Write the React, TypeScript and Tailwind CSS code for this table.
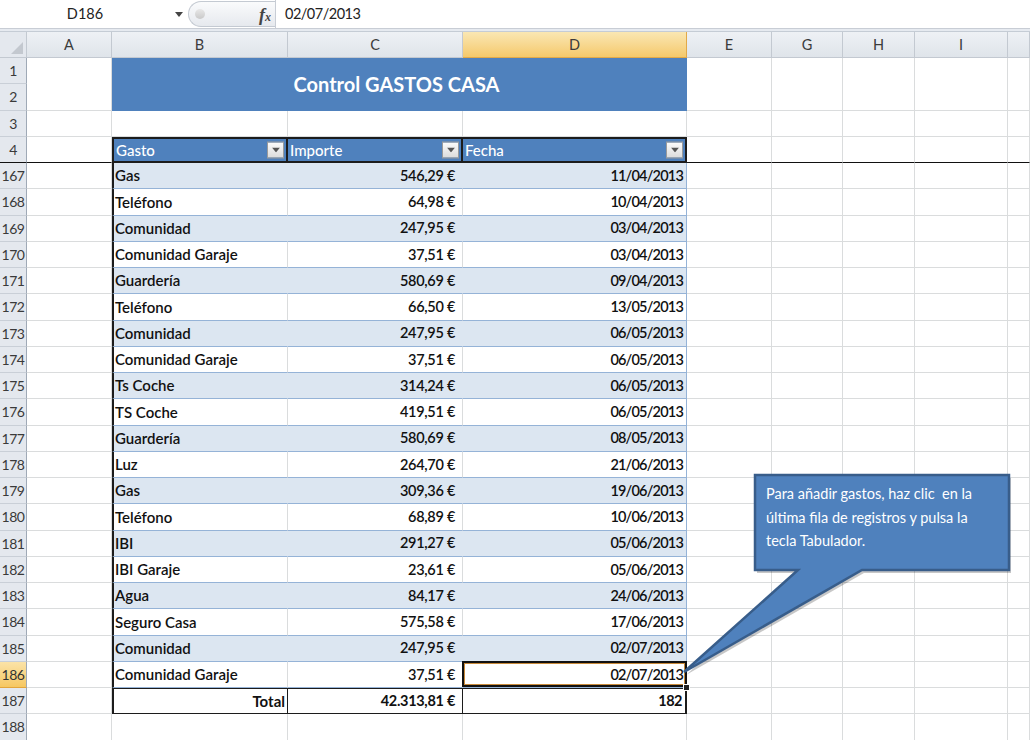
import type {FC, ReactNode} from "react";

type Row = {n: number; gasto: string; importe: string; fecha: string};

const rows: Row[] = [
  {n: 167, gasto: "Gas", importe: "546,29 €", fecha: "11/04/2013"},
  {n: 168, gasto: "Teléfono", importe: "64,98 €", fecha: "10/04/2013"},
  {n: 169, gasto: "Comunidad", importe: "247,95 €", fecha: "03/04/2013"},
  {n: 170, gasto: "Comunidad Garaje", importe: "37,51 €", fecha: "03/04/2013"},
  {n: 171, gasto: "Guardería", importe: "580,69 €", fecha: "09/04/2013"},
  {n: 172, gasto: "Teléfono", importe: "66,50 €", fecha: "13/05/2013"},
  {n: 173, gasto: "Comunidad", importe: "247,95 €", fecha: "06/05/2013"},
  {n: 174, gasto: "Comunidad Garaje", importe: "37,51 €", fecha: "06/05/2013"},
  {n: 175, gasto: "Ts Coche", importe: "314,24 €", fecha: "06/05/2013"},
  {n: 176, gasto: "TS Coche", importe: "419,51 €", fecha: "06/05/2013"},
  {n: 177, gasto: "Guardería", importe: "580,69 €", fecha: "08/05/2013"},
  {n: 178, gasto: "Luz", importe: "264,70 €", fecha: "21/06/2013"},
  {n: 179, gasto: "Gas", importe: "309,36 €", fecha: "19/06/2013"},
  {n: 180, gasto: "Teléfono", importe: "68,89 €", fecha: "10/06/2013"},
  {n: 181, gasto: "IBI", importe: "291,27 €", fecha: "05/06/2013"},
  {n: 182, gasto: "IBI Garaje", importe: "23,61 €", fecha: "05/06/2013"},
  {n: 183, gasto: "Agua", importe: "84,17 €", fecha: "24/06/2013"},
  {n: 184, gasto: "Seguro Casa", importe: "575,58 €", fecha: "17/06/2013"},
  {n: 185, gasto: "Comunidad", importe: "247,95 €", fecha: "02/07/2013"},
  {n: 186, gasto: "Comunidad Garaje", importe: "37,51 €", fecha: "02/07/2013"},
];

const grid = "h-full shrink-0 border-r border-b border-[#dadcdd]";

const RowHeader: FC<{label: ReactNode; active?: boolean; dark?: boolean}> = ({label, active, dark}) => (
  <div
    className={`h-full w-[27px] shrink-0 flex items-center justify-center text-[14px] tracking-[-0.4px] border-r ${
      active
        ? "bg-gradient-to-b from-[#fbe3a7] to-[#f6c760] border-b border-[#e3a53b] text-[#333]"
        : "bg-[#e4e8ee] border-b border-[#c9cfd7] text-[#3a3a3a]"
    } ${dark ? "border-b-[#111]" : ""} border-r-[#9fa9b6]`}
  >
    {label}
  </div>
);

// columns E..J, empty gridline cells
const Tail: FC<{dark?: boolean}> = ({dark}) => {
  const b = dark ? "border-b-[#111]" : "";
  return (
    <>
      <div className={`w-[85px] ${grid} ${b}`} />
      <div className={`w-[71px] ${grid} ${b}`} />
      <div className={`w-[72px] ${grid} ${b}`} />
      <div className={`w-[93px] ${grid} ${b}`} />
      <div className={`flex-1 ${grid} ${b}`} />
    </>
  );
};

const FilterButton: FC = () => (
  <div className="absolute right-[2px] top-1/2 -translate-y-1/2 w-[17px] h-[17px] bg-gradient-to-b from-[#fbfbfb] to-[#dcdcdc] border border-[#9a9a9a] flex items-center justify-center">
    <svg width="8" height="5" viewBox="0 0 8 5">
      <path d="M0 0h8L4 5z" fill="#555" />
    </svg>
  </div>
);

const ColHeader: FC<{w: string; label?: string; active?: boolean}> = ({w, label, active}) => (
  <div
    className={`${w} h-full shrink-0 flex items-center justify-center text-[14.5px] border-r border-b ${
      active
        ? "bg-gradient-to-b from-[#fae7b3] to-[#f5c96a] border-[#e2a948] text-[#3b3b3b]"
        : "bg-gradient-to-b from-[#eef1f5] to-[#dfe4ea] border-[#c3c9d1] text-[#3b3b3b]"
    }`}
  >
    {label}
  </div>
);

export default function App() {
  return (
    <div className="w-[1030px] h-[740px] overflow-hidden bg-white relative font-['Lato',sans-serif] text-[#111]">
      {/* Formula bar */}
      <div className="h-[29px] flex items-center bg-white border-b border-[#c8cdd5]">
        <div className="w-[170px] text-center text-[14.5px] text-[#222]">D186</div>
        <div className="w-[18px] flex items-center justify-center">
          <svg width="8" height="5" viewBox="0 0 8 5">
            <path d="M0 0h8L4 5z" fill="#444" />
          </svg>
        </div>
        <div className="relative h-[26px] w-[87px] rounded-l-full bg-gradient-to-b from-[#fafbfc] to-[#e6e9ee] border-y border-l border-[#c4cad2]">
          <div className="absolute left-[6px] top-[7px] w-[10px] h-[10px] rounded-full bg-gradient-to-b from-[#e8e8e8] to-[#c9c9c9]" />
          <span className="absolute right-[4px] top-0 italic font-['Liberation_Serif',serif] font-bold text-[18px] text-[#444]">
            f<span className="text-[12px]">x</span>
          </span>
        </div>
        <div className="w-px h-[29px] bg-[#c8cdd5]" />
        <div className="pl-[9px] text-[14.5px] tracking-[-0.5px] text-[#222]">02/07/2013</div>
      </div>
      <div className="h-[3px] bg-[#e6eaf0] border-b border-[#c5ccd5]" />

      {/* Column headers */}
      <div className="flex h-[26px]">
        <div className="w-[27px] h-full shrink-0 bg-[#e4e8ee] border-r border-b border-[#c3c9d1] relative">
          <svg className="absolute right-[3px] bottom-[3px]" width="12" height="12" viewBox="0 0 12 12">
            <path d="M12 0v12H0z" fill="#c3c8cf" />
          </svg>
        </div>
        <ColHeader w="w-[85px]" label="A" />
        <ColHeader w="w-[176px]" label="B" />
        <ColHeader w="w-[175px]" label="C" />
        <ColHeader w="w-[224px]" label="D" active />
        <ColHeader w="w-[85px]" label="E" />
        <ColHeader w="w-[71px]" label="G" />
        <ColHeader w="w-[72px]" label="H" />
        <ColHeader w="w-[93px]" label="I" />
        <ColHeader w="flex-1" />
      </div>

      {/* Rows 1-2 with merged title */}
      <div className="flex h-[52.5px]">
        <div className="flex flex-col w-[27px] shrink-0">
          <div className="h-[26.25px]"><RowHeader label="1" /></div>
          <div className="h-[26.25px]"><RowHeader label="2" /></div>
        </div>
        <div className="flex flex-col w-[85px] shrink-0">
          <div className={`h-[26.25px] w-full ${grid}`} />
          <div className={`h-[26.25px] w-full ${grid}`} />
        </div>
        <div className="w-[575px] shrink-0 bg-[#4f81bd] flex items-center justify-center text-white font-bold text-[20px] pr-[6px]">
          Control GASTOS CASA
        </div>
        {[85, 71, 72, 93, 0].map((w) => (
          <div
            key={w}
            className={`flex flex-col shrink-0 ${
              w === 85 ? "w-[85px]" : w === 71 ? "w-[71px]" : w === 72 ? "w-[72px]" : w === 93 ? "w-[93px]" : "flex-1"
            }`}
          >
            <div className={`h-[26.25px] w-full ${grid}`} />
            <div className={`h-[26.25px] w-full ${grid}`} />
          </div>
        ))}
      </div>

      {/* Row 3 */}
      <div className="flex h-[26.25px]">
        <RowHeader label="3" />
        <div className={`w-[85px] ${grid}`} />
        <div className={`w-[176px] ${grid}`} />
        <div className={`w-[175px] ${grid}`} />
        <div className={`w-[224px] ${grid}`} />
        <Tail />
      </div>

      {/* Row 4: table header, frozen pane line below */}
      <div className="flex h-[26.25px]">
        <RowHeader label="4" dark />
        <div className={`w-[85px] ${grid} border-b-[#111]`} />
        <div className="relative w-[176px] h-full shrink-0 bg-[#4f81bd] border-y-2 border-x-2 border-[#1c1c1c] text-white text-[15px] font-medium flex items-center pl-[2px]">
          Gasto
          <FilterButton />
        </div>
        <div className="relative w-[175px] h-full shrink-0 bg-[#4f81bd] border-y-2 border-r-2 border-[#1c1c1c] text-white text-[15px] font-medium flex items-center pl-[2px]">
          Importe
          <FilterButton />
        </div>
        <div className="relative w-[224px] h-full shrink-0 bg-[#4f81bd] border-y-2 border-r-2 border-[#1c1c1c] text-white text-[15px] font-medium flex items-center pl-[2px]">
          Fecha
          <FilterButton />
        </div>
        <Tail dark />
      </div>

      {/* Data rows */}
      {rows.map((r, i) => {
        const band = i % 2 === 0;
        const bg = band ? "bg-[#dce6f1]" : "bg-white";
        const sep = band ? "border-r-[#dce6f1]" : "border-r-[#dadcdd]";
        const active = r.n === 186;
        return (
          <div key={r.n} className="flex h-[26.25px]">
            <RowHeader label={r.n} active={active} />
            <div className={`w-[85px] ${grid}`} />
            <div className={`w-[176px] h-full shrink-0 ${bg} border-l-2 border-l-[#1c1c1c] border-r ${sep} border-b border-b-[#95b3d7] flex items-center pl-[1px] text-[15px] font-semibold`}>
              {r.gasto}
            </div>
            <div className={`w-[175px] h-full shrink-0 ${bg} border-r ${sep} border-b border-b-[#95b3d7] flex items-center justify-end pr-[7px] text-[14.5px] tracking-[-0.3px] font-semibold`}>
              {r.importe}
            </div>
            <div className={`relative w-[224px] h-full shrink-0 ${bg} border-r border-r-[#95b3d7] border-b border-b-[#95b3d7] flex items-center justify-end pr-[3px] text-[14.5px] tracking-[-0.8px] font-semibold`}>
              {r.fecha}
              {active && (
                <>
                  <div className="absolute -left-px -top-px -right-px bottom-0 border-2 border-[#111] shadow-[inset_0_0_0_1px_#c7893a]" />
                  <div className="absolute -right-[4px] -bottom-[4px] w-[7px] h-[7px] bg-[#222] border border-white" />
                </>
              )}
            </div>
            <Tail />
          </div>
        );
      })}

      {/* Total row */}
      <div className="flex h-[26.25px]">
        <RowHeader label="187" />
        <div className={`w-[85px] ${grid}`} />
        <div className="w-[176px] h-full shrink-0 border-l-2 border-t border-r border-b border-[#1c1c1c] flex items-center justify-end pr-[2px] text-[15px] font-bold">
          Total
        </div>
        <div className="w-[175px] h-full shrink-0 border-t border-r border-b border-[#1c1c1c] flex items-center justify-end pr-[7px] text-[14.5px] tracking-[-0.3px] font-bold">
          42.313,81 €
        </div>
        <div className="w-[224px] h-full shrink-0 border-t border-r-2 border-b border-[#1c1c1c] flex items-center justify-end pr-[3px] text-[14.5px] tracking-[-0.5px] font-bold">
          182
        </div>
        <Tail />
      </div>

      {/* Row 188 */}
      <div className="flex h-[26.25px]">
        <RowHeader label="188" />
        <div className={`w-[85px] ${grid}`} />
        <div className={`w-[176px] ${grid}`} />
        <div className={`w-[175px] ${grid}`} />
        <div className={`w-[224px] ${grid}`} />
        <Tail />
      </div>

      {/* Callout */}
      <svg className="absolute left-0 top-0 pointer-events-none" width="1030" height="740" viewBox="0 0 1030 740">
        <polygon
          points="757,478 1011,478 1011,573 864,573 686,675 800,573 757,573"
          fill="rgba(0,0,0,0.22)"
        />
        <polygon
          points="755,475 1009,475 1009,570 862,570 684,672 798,570 755,570"
          fill="#4f81bd"
          stroke="#385d8a"
          strokeWidth="2.5"
          strokeLinejoin="miter"
        />
      </svg>
      <div className="absolute left-[766px] top-[482px] text-white text-[14.5px] leading-[23.5px] whitespace-pre">
        <div>Para añadir gastos, haz clic  en la</div>
        <div>última fila de registros y pulsa la</div>
        <div>tecla Tabulador.</div>
      </div>
    </div>
  );
}
